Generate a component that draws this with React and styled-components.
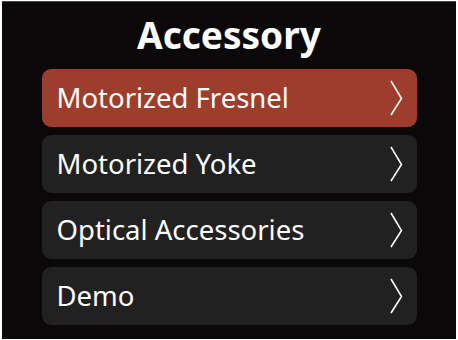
import React from "react";
import styled, { createGlobalStyle } from "styled-components";

const GlobalStyle = createGlobalStyle`
	html, body {
		margin: 0;
		padding: 0;
		background: #ffffff;
	}
	body {
		font-family: "Noto Sans", "DejaVu Sans", sans-serif;
	}
`;

const StyledScreen = styled.div`
	box-sizing: border-box;
	width: 454px;
	height: 338px;
	margin: 1px 0 0 2px;
	border-top: 1px solid #4a4a4a;
	background: #0b0809;
	display: flex;
	flex-direction: column;
	align-items: center;
`;

const StyledTitle = styled.h1`
	margin: 0;
	height: 67px;
	line-height: 66px;
	font-size: 37px;
	font-weight: 700;
	color: #ffffff;
`;

const StyledList = styled.ul`
	margin: 0;
	padding: 0;
	list-style: none;
	display: flex;
	flex-direction: column;
	gap: 8px;
`;

const StyledRow = styled.li`
	box-sizing: border-box;
	width: 375px;
	height: 58px;
	padding: 0 14px 0 15px;
	border-radius: 9px;
	background: ${({ $active }) => ($active ? "#9e3d2c" : "#212121")};
	display: flex;
	align-items: center;
	justify-content: space-between;
	color: #ffffff;
	font-size: 27.5px;
`;

const StyledLabel = styled.span`
	padding-bottom: 1px;
`;

const Chevron = () => (
	<svg width="14" height="36" viewBox="0 0 14 36">
		<polyline
			points="2,1 12.5,18.5 2,35"
			fill="none"
			stroke="#ffffff"
			strokeWidth="1.6"
		/>
	</svg>
);

const items = [
	"Motorized Fresnel",
	"Motorized Yoke",
	"Optical Accessories",
	"Demo",
];

const App = () => {
	return (
		<>
			<GlobalStyle />
			<StyledScreen>
				<StyledTitle>Accessory</StyledTitle>
				<StyledList>
					{items.map((item, i) => (
						<StyledRow key={item} $active={i === 0}>
							<StyledLabel>{item}</StyledLabel>
							<Chevron />
						</StyledRow>
					))}
				</StyledList>
			</StyledScreen>
		</>
	);
};

export default App;
